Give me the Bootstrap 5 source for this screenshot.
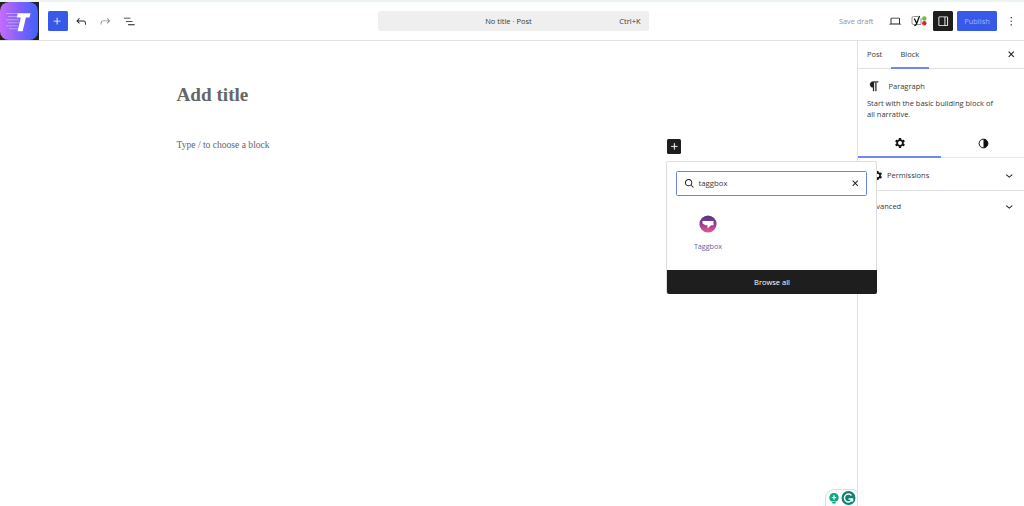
<!DOCTYPE html>
<html lang="en">
<head>
<meta charset="utf-8">
<meta name="viewport" content="width=device-width, initial-scale=1">
<title>Block editor</title>
<link href="https://cdn.jsdelivr.net/npm/bootstrap@5.3.0/dist/css/bootstrap.min.css" rel="stylesheet">
<script src="https://cdn.jsdelivr.net/npm/bootstrap@5.3.0/dist/js/bootstrap.bundle.min.js" defer></script>
<style>
body{font-family:"Open Sans","Noto Sans",sans-serif;font-size:7.5px;line-height:11px;letter-spacing:-.01px;color:#383838;background:#fff}
svg{display:block;flex:none}
.ic{width:14.5px;height:14.5px;fill:#1e1e1e}
.app{height:506px}
.topbar{height:41px;border-top:2px solid #edf5f3;border-bottom:1px solid #e2e2e2;padding-right:1px}
.logo-tile{width:38.5px;height:38px;background:#222}
.sq{width:20px;height:20px;border:0;padding:0;border-radius:1.5px;display:flex;align-items:center;justify-content:center}
.blue{background:#3858e9}.dark{background:#1e1e1e}
.blue .ic,.dark .ic{fill:#fff}
.tools{padding-left:9px;width:339px}
.tools>:nth-child(2){margin-left:6.5px}
.tools>:nth-child(n+2){margin-right:9.4px}
.cmd{width:271px;height:20px;background:#efefef;border-radius:2.5px}
.cmd span:first-child{padding-left:20px}
.cmd span:last-child{padding-right:8px}
.save{color:#949494;margin-right:14px;font-size:7.4px}
.publish{width:40px;height:20px;border-radius:1.5px;color:#a3b3f8;border:0;padding:0;font-size:7.5px;margin:0 6.5px 0 4px}
.canvas{font-family:"Liberation Serif",serif;color:#666;padding:42px 0 0 176.5px}
.canvas h1{font-size:19.2px;line-height:24px;font-weight:700;margin:0;color:#666}
.canvas p{font-size:9.6px;line-height:12px;margin:32px 0 0}
.inspector{width:167px;border-left:1px solid #e0e0e0}
.tabs{height:28px;border-bottom:1px solid #e0e0e0}
.tabs span{height:28px;line-height:27px}
.tabs .on,.subtabs .on{border-bottom:2px solid #7189ee}
.tab-a{padding:0 9px}.tab-b{padding:0 9.3px}
.info{height:61px;padding:10px 0 0 9px}
.subtabs{height:28px;border-bottom:1px solid #e6e6e6}
.subtabs div{width:84px;height:28px;display:flex;align-items:center;justify-content:center}
.panel-row{height:33px;border-bottom:1px solid #e3e3e3;padding:2px 8px 0 14px}
.panel-last{height:31px;padding:0 8px 0 9px}
.adder{left:667px;top:139px;width:14px;height:14.5px}
.adder .ic{width:13px;height:13px}
.inserter{left:666px;top:161px;width:211px;height:133px;background:#fff;border:1px solid #dedede;border-bottom:0;border-radius:2px;padding:9px 9px 0}
.find{height:25px;border:1px solid #6c83ec;border-radius:1.5px;padding:0 4px 0 5px}
.find span{margin-left:2px;font-size:7.8px}
.result{width:64px;margin-top:19px;color:#5a68a5}
.browse{height:24px;background:#1e1e1e;color:#fff;margin:18px -10px 0 -9px;border-radius:0 0 2px 2px}
.pill{left:825px;top:489px;width:33px;height:20px;border:1px solid #dcdfe2;border-radius:9px 5px 0 0;background:#fff}
</style>
</head>
<body class="overflow-hidden">
<div class="app d-flex flex-column position-relative overflow-hidden">
  <header class="topbar d-flex align-items-center flex-shrink-0">
    <div class="logo-tile">
      <svg width="38.500" height="38" viewBox="0 0 39 39" preserveAspectRatio="none"><defs><linearGradient id="lg"><stop offset="0" stop-color="#c56bfa"/><stop offset=".5" stop-color="#8360fb"/><stop offset="1" stop-color="#3d62fb"/></linearGradient></defs><rect width="38.500" height="39" rx="9" fill="url(#lg)"/><path d="M18 11.500h13l-1.200 4.500h-3.600L23 30h-5.200L21 16h-4z" fill="#fff"/><path d="M6 11.800h13M8 15h11M6 18.300h13M8 21.300h11M6 24.500h12M9 27.500h10" stroke="#f0e4ff" stroke-opacity=".6" stroke-width=".8"/></svg>
    </div>
    <div class="tools d-flex align-items-center">
      <button class="sq blue" aria-label="Add"><svg class="ic" viewBox="0 0 24 24"><path d="M11 12.500V17.500H12.500V12.500H17.500V11H12.500V6H11V11H6V12.500H11Z"/></svg></button>
      <svg class="ic" viewBox="0 0 24 24"><path d="M18.300 11.700c-.6-.6-1.400-.9-2.300-.9H6.700l2.900-3.300-1.100-1-4.500 5L8.500 16l1-1-2.700-2.700H16c.5 0 .9.2 1.300.5 1 1 1 3.400 1 4.500v.3h1.500v-.2c0-1.500 0-4.300-1.500-5.700z"/></svg>
      <svg class="ic opacity-50" viewBox="0 0 24 24"><path d="M15.600 6.500l-1.100 1 2.900 3.300H8c-.9 0-1.700.3-2.300.9-1.400 1.500-1.400 4.200-1.400 5.600v.2h1.500v-.3c0-1.100 0-3.500 1-4.500.3-.3.7-.5 1.300-.5h9.200L14.500 15l1.100 1.100 4.600-4.600-4.600-5z"/></svg>
      <svg class="ic" viewBox="0 0 24 24"><path d="M3 6h11v1.500H3V6Zm3.500 5.500h11V13h-11v-1.500ZM21 17H10v1.500h11V17Z"/></svg>
    </div>
    <div class="cmd d-flex align-items-center"><span class="flex-fill text-center">No title · Post</span><span>Ctrl+K</span></div>
    <div class="d-flex align-items-center ms-auto">
      <span class="save">Save draft</span>
      <svg class="ic" viewBox="0 0 24 24"><path d="M20.500 16h-.7V8c0-1.100-.9-2-2-2H6.200c-1.100 0-2 .9-2 2v8h-.7c-.8 0-1.500.7-1.500 1.500h20c0-.8-.7-1.500-1.500-1.500zM5.700 8c0-.3.2-.5.5-.5h11.600c.3 0 .5.2.5.5v7.600H5.700V8z"/></svg>
      <svg width="16" height="12" viewBox="0 0 16 12" style="margin:0 6px 0 9px"><path d="M7 1.500H2.500Q1 1.500 1 3v5q0 1.500 1.500 1.500h7.500V3" fill="none" stroke="#777" stroke-width=".8"/><path d="M3.300 3.500 5.500 8M8.500 1 5.400 9.200Q4.800 10.500 3.300 10.500" fill="none" stroke="#111" stroke-width="1.300"/><circle cx="13.300" cy="3.500" r="2.200" fill="#6bbf3a"/><circle cx="13.300" cy="8.300" r="2.200" fill="#e02036"/></svg>
      <button class="sq dark" aria-label="Settings"><svg class="ic" viewBox="0 0 24 24"><path d="M18 4H6c-1.100 0-2 .9-2 2v12c0 1.100.9 2 2 2h12c1.100 0 2-.9 2-2V6c0-1.100-.9-2-2-2zm-4 14.500H6c-.3 0-.5-.2-.5-.5V6c0-.3.2-.5.5-.5h8v13zm4.500-.5c0 .3-.2.5-.5.5h-2.500v-13H18c.3 0 .5.2.5.5v12z"/></svg></button>
      <button class="publish blue">Publish</button>
      <svg class="ic" viewBox="0 0 24 24" style="margin-right:5px"><path d="M13 19h-2v-2h2v2zm0-6h-2v-2h2v2zm0-6h-2V5h2v2z"/></svg>
    </div>
  </header>
  <div class="d-flex flex-fill">
    <main class="canvas flex-fill"><h1>Add title</h1><p>Type / to choose a block</p></main>
    <aside class="inspector flex-shrink-0">
      <div class="tabs d-flex"><span class="tab-a">Post</span><span class="tab-b on">Block</span><svg class="ic ms-auto align-self-center" viewBox="0 0 24 24" style="margin-right:6px"><path d="M12 13.060l3.712 3.713 1.061-1.060L13.061 12l3.712-3.712-1.060-1.060L12 10.938 8.288 7.227l-1.061 1.060L10.939 12l-3.712 3.712 1.060 1.061L12 13.061z" stroke="#1e1e1e" stroke-width=".2"/></svg></div>
      <div class="info">
        <div class="d-flex align-items-center"><svg class="ic" viewBox="0 0 24 24"><path d="m9.996 14v6h1.500v-14.500h2.500v14.500h1.500v-14.500h3v-1.500h-8.500c-2.760 0-5 2.240-5 5s2.240 5 5 5z" stroke="#1e1e1e" stroke-width=".5"/></svg><span style="margin-left:7px">Paragraph</span></div>
        <div class="text-nowrap" style="margin-top:4px">Start with the basic building block of<br>all narrative.</div>
      </div>
      <div class="subtabs d-flex">
        <div class="on"><svg width="12" height="12" viewBox="-12 -12 24 24"><g id="cog"><circle r="5.700" fill="none" stroke="#111" stroke-width="3.400"/><path id="tooth" d="M-3-6.500-2-10H2L3-6.500z" fill="#111"/><use href="#tooth" transform="rotate(60)"/><use href="#tooth" transform="rotate(120)"/><use href="#tooth" transform="rotate(180)"/><use href="#tooth" transform="rotate(240)"/><use href="#tooth" transform="rotate(300)"/></g></svg></div>
        <div><svg width="12" height="12" viewBox="0 0 12 12"><circle cx="6.500" cy="5.500" r="4.400" fill="#fff" stroke="#111" stroke-width="1"/><path d="M6.500 1.100a4.400 4.400 0 0 1 0 8.800z" fill="#111"/></svg></div>
      </div>
      <div class="panel-row d-flex align-items-center"><svg width="11" height="11" viewBox="-12 -12 24 24"><use href="#cog"/></svg><span style="margin-left:4px">Permissions</span><svg class="ic ms-auto" viewBox="0 0 24 24"><path d="M17.500 11.600L12 16l-5.500-4.400.9-1.200L12 14l4.500-3.600 1 1.200z"/></svg></div>
      <div class="panel-last d-flex align-items-center"><span>Advanced</span><svg class="ic ms-auto" viewBox="0 0 24 24"><path d="M17.500 11.600L12 16l-5.500-4.400.9-1.200L12 14l4.500-3.600 1 1.200z"/></svg></div>
    </aside>
  </div>
  <button class="sq dark adder position-absolute" aria-label="Add block"><svg class="ic" viewBox="0 0 24 24"><path d="M11 12.500V17.500H12.500V12.500H17.500V11H12.500V6H11V11H6V12.500H11Z" stroke="#fff" stroke-width=".4"/></svg></button>
  <section class="inserter position-absolute">
    <div class="find d-flex align-items-center"><svg class="ic" viewBox="0 0 24 24"><path transform="matrix(-1 0 0 1 24 0)" d="M13 5c-3.300 0-6 2.700-6 6 0 1.400.5 2.700 1.300 3.700l-3.800 3.800 1.100 1.100 3.800-3.800c1 .8 2.300 1.300 3.700 1.300 3.300 0 6-2.700 6-6S16.300 5 13 5zm0 10.500c-2.500 0-4.500-2-4.500-4.500s2-4.500 4.500-4.500 4.500 2 4.500 4.500-2 4.500-4.500 4.500z"/></svg><span>taggbox</span><svg class="ic ms-auto" viewBox="0 0 24 24"><path d="M12 13.060l3.712 3.713 1.061-1.060L13.061 12l3.712-3.712-1.060-1.060L12 10.938 8.288 7.227l-1.061 1.060L10.939 12l-3.712 3.712 1.060 1.061L12 13.061z"/></svg></div>
    <div class="result d-flex flex-column align-items-center">
      <svg width="18" height="18" viewBox="0 0 18 18"><defs><linearGradient id="tg" x2="0" y2="1"><stop offset="0" stop-color="#4b3489"/><stop offset=".5" stop-color="#91408f"/><stop offset="1" stop-color="#ee5593"/></linearGradient></defs><circle cx="9" cy="9" r="8.600" fill="url(#tg)"/><path d="M3.500 6h11v4.200h-2.400L8.500 13.500v-3.300H6.500L3.500 8.500z" fill="#fff"/></svg>
      <span style="margin-top:8px;font-size:7.200px">Taggbox</span>
    </div>
    <div class="browse d-flex align-items-center justify-content-center">Browse all</div>
  </section>
  <div class="pill position-absolute"><svg width="32" height="17" viewBox="0 0 32 17"><path d="M8 3a4.600 4.600 0 0 0-2.500 8.500h5A4.600 4.600 0 0 0 8 3zM6.300 11h3.400v2.500H6.300z" fill="#11a683"/><path d="M8 5.300v4.400M5.800 7.500h4.400" stroke="#fff" stroke-width="1.200"/><circle cx="22.500" cy="8" r="7" fill="#0b8570"/><path d="M25.500 5.500A4 4 0 1 0 26.300 9H22.500M26.500 8.500v3" fill="none" stroke="#fff" stroke-width="1.400"/></svg></div>
</div>
</body>
</html>
